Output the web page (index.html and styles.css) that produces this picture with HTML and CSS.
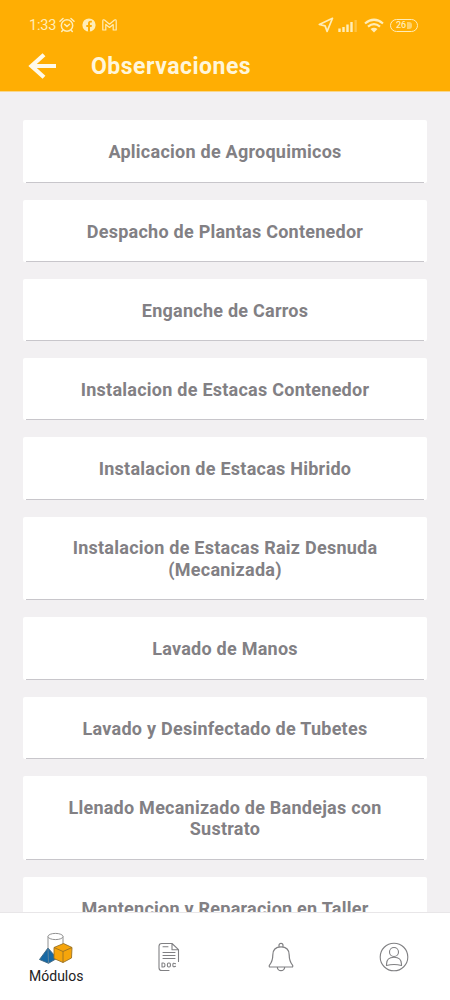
FILE: index.html
```html
<!DOCTYPE html>
<html lang="es">
<head>
<meta charset="utf-8">
<title>Observaciones</title>
<link rel="stylesheet" href="styles.css">
</head>
<body>
<div class="app">
  <header class="header">
    <div class="status">
      <span class="time">1:33</span>
      <svg class="alarm" width="16" height="16" viewBox="0 0 16 16" fill="none" stroke="currentColor" stroke-width="1.5" stroke-linecap="round"><circle cx="8" cy="8.5" r="5.7"/><path d="M1 4.200 4 1.500M15 4.200 12 1.500M3.800 13.200 2.700 14.500M12.200 13.200l1.100 1.300M5.700 7.400 8 9.500l2.500-2.200"/></svg>
      <svg class="facebook" width="14" height="14" viewBox="0 0 14 14"><circle cx="7" cy="7" r="6.600" fill="currentColor"/><path d="M6 13.700V9H4.300V7H6V5.600C6 3.700 7 2.800 8.700 2.800h1.200v1.800H9c-.7 0-1 .3-1 1V7h1.900l-.3 2H8v4.700" fill="#ffae03"/></svg>
      <svg class="gmail" width="15" height="12" viewBox="0 0 15 12" fill="none" stroke="currentColor" stroke-width="1.200" stroke-linejoin="round"><path d="M.8 11V2Q.8.2 2.500 1l5 4.200 5-4.200q1.700-.8 1.700 1v9h-3V5.500L7.500 8.500 3.800 5.500V11z"/></svg>
      <span class="spacer"></span>
      <svg class="location" width="16" height="16" viewBox="0 0 16 16" fill="none" stroke="currentColor" stroke-width="1.700" stroke-linejoin="round"><path d="M14.500 1.300 1.300 7.500l5.800 1.400 2 5.500z"/></svg>
      <svg class="signal" width="20" height="13" viewBox="0 0 20 13" fill="currentColor"><path d="M.3 9.500h2.400V13H.3zM4.300 8h2.400v5H4.300zM8.300 5.500h2.400V13H8.300zM12.300 3h2.400v10h-2.400z"/><path d="M16.500 1h2.300v12h-2.300z" opacity=".35"/></svg>
      <svg class="wifi" width="20" height="15" viewBox="0 0 20 15" fill="none" stroke="currentColor" stroke-width="2.200"><path d="M1 5.500q9-7.500 18 0M4 8.700q6-5 12 0"/><path d="M6.500 11q3.500-2.500 7 0L10 14.500z" fill="currentColor" stroke="none"/></svg>
      <span class="battery">26<i></i></span>
    </div>
    <div class="titlebar">
      <svg class="back" width="30" height="26" viewBox="0 0 30 26" fill="none" stroke="currentColor" stroke-width="4.200"><path d="M17 1.800 4.500 13 17 24.200M4 13h25"/></svg>
      <h1>Observaciones</h1>
    </div>
  </header>
  <main class="list">
    <div class="card">Aplicacion de Agroquimicos</div>
    <div class="card">Despacho de Plantas Contenedor</div>
    <div class="card">Enganche de Carros</div>
    <div class="card">Instalacion de Estacas Contenedor</div>
    <div class="card">Instalacion de Estacas Hibrido</div>
    <div class="card">Instalacion de Estacas Raiz Desnuda (Mecanizada)</div>
    <div class="card">Lavado de Manos</div>
    <div class="card">Lavado y Desinfectado de Tubetes</div>
    <div class="card">Llenado Mecanizado de Bandejas con Sustrato</div>
    <div class="card">Mantencion y Reparacion en Taller</div>
  </main>
  <nav class="tabs">
    <div class="tab active">
      <svg width="36" height="32" viewBox="0 0 36 32" stroke-width=".9" stroke-linejoin="round"><path d="M10 4.500v20q7 3 15 0v-20" fill="#fff" stroke="#858585"/><ellipse cx="17.500" cy="4.500" rx="7.500" ry="3.100" fill="#fff" stroke="#858585"/><path d="m10 16-8.500 11.500 9 3.800 8.500-5z" fill="#1769a5" stroke="#3f6680"/><path d="m10 16 .5 15.300" stroke="#68899e"/><path d="m16 15.500 9.500-4 8.500 4-.5 10.500-8.500 4.500-9-4z" fill="#f6a50b" stroke="#9a7225"/><path d="m16 15.500 9 4 9-4M25 19.500v11" fill="none" stroke="#9a7225"/></svg>
      <span>Módulos</span>
    </div>
    <div class="tab">
      <svg width="24" height="30" viewBox="0 0 24 30" fill="none" stroke="#808083" stroke-width="1.100" stroke-linecap="round" stroke-linejoin="round"><path d="M12 28.500H4.800Q2 28.500 2 25.700V4.300Q2 1.500 4.800 1.500H15l6.500 6.200v11.800M15 1.500v6.200h6.500M6 4.700h5M6 10.500h12M6 13.500h12M6 16.500h12"/><path d="M5 21v4h1.500q1.500 0 1.500-2t-1.500-2zM18.500 21.700q-2.700-1.500-2.700 1.300t2.700 1.300"/><rect x="10.400" y="21" width="3" height="4" rx="1.200"/></svg>
    </div>
    <div class="tab">
      <svg width="26" height="30" viewBox="0 0 26 30" fill="none" stroke="#808083" stroke-width="1.200" stroke-linejoin="round"><path d="M11 5V3.300a2 2 0 0 1 4 0V5M1.500 25q-.7-.8 0-1.800Q4.800 19 4.800 13C4.800 7.500 8 4.800 13 4.800S21.200 7.500 21.200 13q0 6 3.300 10.200.7 1 0 1.800zM9.300 25a3.700 3.700 0 0 0 7.400 0"/></svg>
    </div>
    <div class="tab">
      <svg width="30" height="30" viewBox="0 0 30 30" fill="none" stroke="#808083" stroke-width="1.100" stroke-linejoin="round"><circle cx="15" cy="15" r="13.800"/><circle cx="15" cy="10" r="4.500"/><path d="M7.500 23.500v-1.200c0-4.600 3-7 7.500-7s7.500 2.400 7.500 7v1.200q-7.500-2-15 0z"/></svg>
    </div>
  </nav>
</div>
</body>
</html>
```
FILE: styles.css
```css
* { box-sizing: border-box; }
body { margin: 0; font-family: Roboto, "Liberation Sans", sans-serif; }
.app { display: flex; flex-direction: column; width: 450px; height: 1000px; overflow: hidden; background: #f2f0f2; }
.header { flex: none; height: 92px; background: #ffae03; color: #fff6da; border-bottom: 1px solid #f9d78d; }
.status { display: flex; align-items: center; height: 40px; padding: 10px 32px 0 29px; color: #ffedb8; }
.time { width: 30px; font-size: 14.500px; letter-spacing: -.2px; }
.facebook { margin-left: 7px; }
.gmail { margin-left: 6px; }
.spacer { flex: 1; }
.signal { margin-left: 4px; }
.wifi { margin-left: 6px; }
.battery { display: flex; align-items: center; justify-content: center; gap: 1px; width: 28px; height: 13px; margin-left: 6px; border: 1.500px solid; border-radius: 7px; font-size: 9px; font-weight: 500; }
.battery i { width: 5px; height: 7px; background: #ffd36c; border-radius: 0 3px 3px 0; }
.titlebar { display: flex; align-items: center; height: 51px; padding-left: 27px; }
.back { color: #fffaea; }
h1 { margin: 2px 0 0 34px; font-size: 23px; line-height: 28px; font-weight: 700; letter-spacing: .5px; }
.list { flex: 1; min-height: 0; overflow: hidden; display: flex; flex-direction: column; gap: 17px; padding: 28.450px 23px 0; }
.card { position: relative; flex: none; padding: 20.900px 34px 19.630px; background: #fff; border-radius: 2px; color: #828084; font-size: 18px; font-weight: 700; line-height: 21.700px; text-align: center; letter-spacing: .25px; }
.card::after { content: ""; position: absolute; left: 3px; right: 3px; bottom: 0; height: 1px; background: #c8c6cb; }
.tabs { flex: none; display: flex; height: 88px; background: #fff; border-top: 1px solid #e8e6e8; }
.tab { flex: 1; display: flex; flex-direction: column; align-items: center; padding-top: 29px; }
.tab.active { padding-top: 19px; color: #222; font-size: 14px; line-height: 17px; }
.tab.active span { margin-top: 4px; }
```
